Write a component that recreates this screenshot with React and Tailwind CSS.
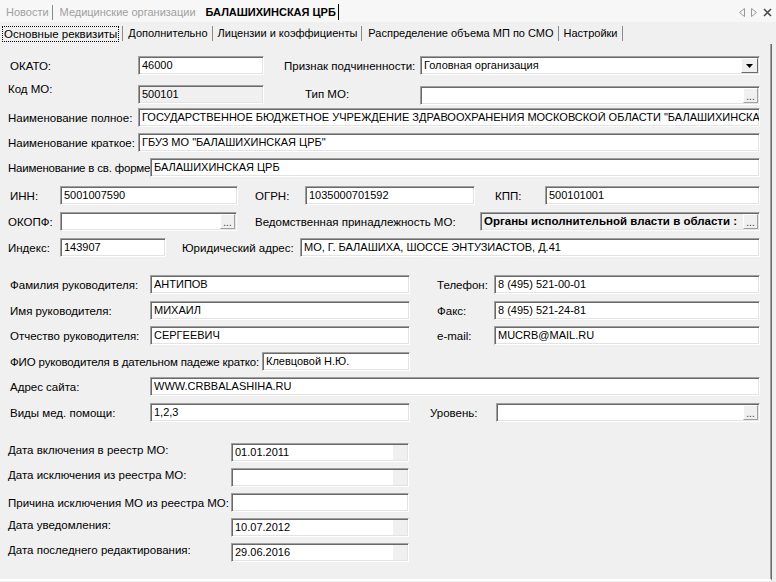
import React from 'react';

const inputBase =
  'h-[19px] shrink-0 border border-t-[#a0a0a0] border-l-[#a0a0a0] border-r-white border-b-white shadow-[inset_1px_1px_0_#696969,inset_-1px_-1px_0_#e3e3e3] flex items-center overflow-hidden whitespace-nowrap leading-none text-[11px]';

const Field = ({ className = '', children, btn, dd, gray, bold, date }) => (
  <div className={`${inputBase} ${gray ? 'bg-[#f0f0f0]' : 'bg-white'} ${className}`}>
    <span className={`flex-1 min-w-0 overflow-hidden pl-[3px] ${bold ? 'font-bold text-[11.5px]' : ''}`}>{children}</span>
    {btn && (
      <div className="w-[15px] h-[15px] mr-[1px] shrink-0 bg-[#f0f0f0] border border-t-white border-l-white border-r-[#a0a0a0] border-b-[#a0a0a0] flex items-end justify-center text-[10px] leading-[10px] text-[#333]">
        ...
      </div>
    )}
    {dd && (
      <div className="w-[17px] h-[15px] mr-[1px] shrink-0 bg-[#f0f0f0] border border-t-white border-l-white border-r-[#696969] border-b-[#696969] flex items-center justify-center">
        <svg width="7" height="4" viewBox="0 0 7 4"><path d="M0 0h7L3.5 4z" fill="#000" /></svg>
      </div>
    )}
    {date && <div className="w-[14px] h-[15px] mr-[1px] shrink-0 bg-[#f0f0f0]" />}
  </div>
);

const Label = ({ className = '', children }) => (
  <div className={`shrink-0 whitespace-nowrap leading-[14px] ${className}`}>{children}</div>
);

const Row = ({ className = '', children }) => (
  <div className={`flex items-center h-[19px] ${className}`}>{children}</div>
);

const Sep = ({ className = '' }) => <span className={`w-px h-[15px] bg-[#8a8a8a] ${className}`} />;

export default function App() {
  return (
    <div className="w-[776px] h-[582px] overflow-hidden bg-[#f0f0f0] text-black text-[11.5px] font-['Liberation_Sans',Arial,sans-serif] flex flex-col">
      {/* document tabs */}
      <div className="h-[22px] bg-[#f7f7f7] flex items-center pl-[6px] pt-[2px] text-[11px] text-[#a0a0a0] shrink-0">
        <span>Новости</span>
        <Sep className="ml-[3px]" />
        <span className="ml-[7px]">Медицинские организации</span>
        <span className="ml-[10px] font-bold text-black">БАЛАШИХИНСКАЯ ЦРБ</span>
        <span className="ml-[2px] w-px h-[16px] bg-black" />
        <div className="ml-auto mr-[4px] flex items-center gap-[6px]">
          <svg width="6" height="9" viewBox="0 0 6 9"><path d="M5.5 0.5v8L0.5 4.5z" fill="none" stroke="#999" /></svg>
          <svg width="6" height="9" viewBox="0 0 6 9"><path d="M0.5 0.5v8l5-4z" fill="none" stroke="#999" /></svg>
          <svg width="9" height="9" viewBox="0 0 9 9"><path d="M1 1l7 7M8 1l-7 7" stroke="#444" strokeWidth="1.5" /></svg>
        </div>
      </div>

      {/* page tabs */}
      <div className="h-[22px] flex items-center pl-[2px] pt-[1px] shrink-0 text-[11px]">
        <span className="border border-dotted border-black px-[1px] leading-[14px] text-[11.5px]">Основные реквизиты</span>
        <Sep className="ml-[3px]" />
        <span className="ml-[5px]">Дополнительно</span>
        <Sep className="ml-[4px]" />
        <span className="ml-[5px]">Лицензии и коэффициенты</span>
        <Sep className="ml-[4px]" />
        <span className="ml-[6px]">Распределение объема МП по СМО</span>
        <Sep className="ml-[4px]" />
        <span className="ml-[5px]">Настройки</span>
        <Sep className="ml-[4px]" />
      </div>

      {/* panel */}
      <div className="flex-1 mr-[4px] border-r border-r-[#696969] border-b-2 border-b-white shadow-[inset_-1px_0_0_#a0a0a0] mb-[1px]">
        <Row className="mt-[12px]">
          <Label className="w-[138px] pl-[10px]">ОКАТО:</Label>
          <Field className="w-[126px]">46000</Field>
          <Label className="w-[156px] pl-[20px]">Признак подчиненности:</Label>
          <Field className="w-[340px]" dd>Головная организация</Field>
        </Row>
        <Row className="mt-[10px]">
          <Label className="w-[138px] pl-[8px] self-start -mt-[3px]">Код МО:</Label>
          <Field className="w-[126px]" gray>500101</Field>
          <Label className="w-[156px] pl-[41px] -mt-[1px]">Тип МО:</Label>
          <Field className="w-[340px] mt-[2px]" btn></Field>
        </Row>
        <Row className="mt-[4px]">
          <Label className="w-[138px] pl-[8px]">Наименование полное:</Label>
          <Field className="w-[622px]">ГОСУДАРСТВЕННОЕ БЮДЖЕТНОЕ УЧРЕЖДЕНИЕ ЗДРАВООХРАНЕНИЯ МОСКОВСКОЙ ОБЛАСТИ "БАЛАШИХИНСКАЯ ЦЕНТРАЛЬНАЯ РАЙОННАЯ БОЛЬНИЦА"</Field>
        </Row>
        <Row className="mt-[6px]">
          <Label className="w-[138px] pl-[8px]">Наименование краткое:</Label>
          <Field className="w-[622px]">ГБУЗ МО "БАЛАШИХИНСКАЯ ЦРБ"</Field>
        </Row>
        <Row className="mt-[6px]">
          <Label className="w-[150px] pl-[8px] tracking-[-0.2px]">Наименование в св. форме:</Label>
          <Field className="w-[610px]">БАЛАШИХИНСКАЯ ЦРБ</Field>
        </Row>

        <Row className="mt-[9px]">
          <Label className="w-[60px] pl-[10px]">ИНН:</Label>
          <Field className="w-[178px]">5001007590</Field>
          <Label className="w-[67px] pl-[17px]">ОГРН:</Label>
          <Field className="w-[170px]">1035000701592</Field>
          <Label className="w-[70px] pl-[20px]">КПП:</Label>
          <Field className="w-[215px]">500101001</Field>
        </Row>
        <Row className="mt-[7px]">
          <Label className="w-[60px] pl-[8px]">ОКОПФ:</Label>
          <Field className="w-[177px]" btn></Field>
          <Label className="w-[243px] pl-[18px]">Ведомственная принадлежность МО:</Label>
          <Field className="w-[280px]" btn bold gray>Органы исполнительной власти в области :</Field>
        </Row>
        <Row className="mt-[7px]">
          <Label className="w-[60px] pl-[8px]">Индекс:</Label>
          <Field className="w-[106px]">143907</Field>
          <Label className="w-[134px] pl-[16px]">Юридический адрес:</Label>
          <Field className="w-[460px]">МО, Г. БАЛАШИХА, ШОССЕ ЭНТУЗИАСТОВ, Д.41</Field>
        </Row>

        <Row className="mt-[18px]">
          <Label className="w-[150px] pl-[10px]">Фамилия руководителя:</Label>
          <Field className="w-[260px]">АНТИПОВ</Field>
          <Label className="w-[84px] pl-[27px]">Телефон:</Label>
          <Field className="w-[266px]">8 (495) 521-00-01</Field>
        </Row>
        <Row className="mt-[7px]">
          <Label className="w-[150px] pl-[10px]">Имя руководителя:</Label>
          <Field className="w-[260px]">МИХАИЛ</Field>
          <Label className="w-[84px] pl-[27px]">Факс:</Label>
          <Field className="w-[266px]">8 (495) 521-24-81</Field>
        </Row>
        <Row className="mt-[6px]">
          <Label className="w-[150px] pl-[10px]">Отчество руководителя:</Label>
          <Field className="w-[260px]">СЕРГЕЕВИЧ</Field>
          <Label className="w-[84px] pl-[27px]">e-mail:</Label>
          <Field className="w-[266px]">MUCRB@MAIL.RU</Field>
        </Row>
        <Row className="mt-[7px]">
          <Label className="w-[262px] pl-[10px] tracking-[-0.15px]">ФИО руководителя в дательном падеже кратко:</Label>
          <Field className="w-[148px]">Клевцовой Н.Ю.</Field>
        </Row>
        <Row className="mt-[6px]">
          <Label className="w-[150px] pl-[10px]">Адрес сайта:</Label>
          <Field className="w-[610px]">WWW.CRBBALASHIHA.RU</Field>
        </Row>
        <Row className="mt-[7px]">
          <Label className="w-[150px] pl-[10px]">Виды мед. помощи:</Label>
          <Field className="w-[260px]">1,2,3</Field>
          <Label className="w-[86px] pl-[20px]">Уровень:</Label>
          <Field className="w-[264px]" btn></Field>
        </Row>

        <Row className="mt-[21px]">
          <Label className="w-[231px] pl-[8px] self-start">Дата включения в реестр МО:</Label>
          <Field className="w-[178px]" date>01.01.2011</Field>
        </Row>
        <Row className="mt-[6px]">
          <Label className="w-[231px] pl-[8px] self-start">Дата исключения из реестра МО:</Label>
          <Field className="w-[178px]" date></Field>
        </Row>
        <Row className="mt-[6px]">
          <Label className="w-[231px] pl-[8px]">Причина исключения МО из реестра МО:</Label>
          <Field className="w-[178px]"></Field>
        </Row>
        <Row className="mt-[6px]">
          <Label className="w-[231px] pl-[8px] self-start">Дата уведомления:</Label>
          <Field className="w-[178px]" date>10.07.2012</Field>
        </Row>
        <Row className="mt-[6px]">
          <Label className="w-[231px] pl-[8px] self-start">Дата последнего редактирования:</Label>
          <Field className="w-[178px]" date>29.06.2016</Field>
        </Row>
      </div>
    </div>
  );
}
